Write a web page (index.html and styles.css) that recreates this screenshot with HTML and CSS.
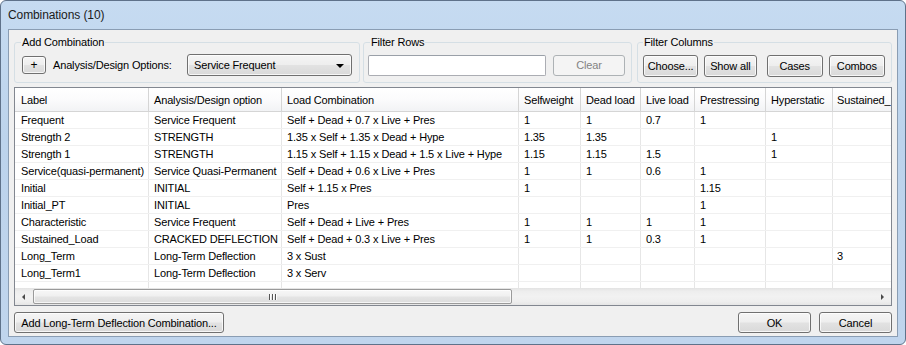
FILE: index.html
```html
<!DOCTYPE html>
<html>
<head>
<meta charset="utf-8">
<link rel="stylesheet" href="styles.css">
</head>
<body>
<div class="window">
  <div class="titlebar">Combinations (10)</div>
  <div class="client">
    <div class="groups">
      <fieldset class="group g1">
        <legend>Add Combination</legend>
        <div class="grow">
          <div class="btn plus">+</div>
          <span class="lbl">Analysis/Design Options:</span>
          <div class="btn combo"><span>Service Frequent</span><span class="arrow"></span></div>
        </div>
      </fieldset>
      <fieldset class="group g2">
        <legend>Filter Rows</legend>
        <div class="grow">
          <div class="textbox"></div>
          <div class="btn disabled clear">Clear</div>
        </div>
      </fieldset>
      <fieldset class="group g3">
        <legend>Filter Columns</legend>
        <div class="grow">
          <div class="btn choose">Choose...</div>
          <div class="btn showall">Show all</div>
          <div class="btn cases">Cases</div>
          <div class="btn combos">Combos</div>
        </div>
      </fieldset>
    </div>

    <div class="grid">
      <div class="gridbody">
        <div class="row head">
          <div class="cell">Label</div>
          <div class="cell">Analysis/Design option</div>
          <div class="cell">Load Combination</div>
          <div class="cell">Selfweight</div>
          <div class="cell">Dead load</div>
          <div class="cell">Live load</div>
          <div class="cell">Prestressing</div>
          <div class="cell">Hyperstatic</div>
          <div class="cell">Sustained_</div>
        </div>
        <div class="row">
          <div class="cell">Frequent</div><div class="cell">Service Frequent</div><div class="cell">Self + Dead + 0.7 x Live + Pres</div>
          <div class="cell">1</div><div class="cell">1</div><div class="cell">0.7</div><div class="cell">1</div><div class="cell"></div><div class="cell"></div>
        </div>
        <div class="row">
          <div class="cell">Strength 2</div><div class="cell">STRENGTH</div><div class="cell">1.35 x Self + 1.35 x Dead + Hype</div>
          <div class="cell">1.35</div><div class="cell">1.35</div><div class="cell"></div><div class="cell"></div><div class="cell">1</div><div class="cell"></div>
        </div>
        <div class="row">
          <div class="cell">Strength 1</div><div class="cell">STRENGTH</div><div class="cell">1.15 x Self + 1.15 x Dead + 1.5 x Live + Hype</div>
          <div class="cell">1.15</div><div class="cell">1.15</div><div class="cell">1.5</div><div class="cell"></div><div class="cell">1</div><div class="cell"></div>
        </div>
        <div class="row">
          <div class="cell">Service(quasi-permanent)</div><div class="cell">Service Quasi-Permanent</div><div class="cell">Self + Dead + 0.6 x Live + Pres</div>
          <div class="cell">1</div><div class="cell">1</div><div class="cell">0.6</div><div class="cell">1</div><div class="cell"></div><div class="cell"></div>
        </div>
        <div class="row">
          <div class="cell">Initial</div><div class="cell">INITIAL</div><div class="cell">Self + 1.15 x Pres</div>
          <div class="cell">1</div><div class="cell"></div><div class="cell"></div><div class="cell">1.15</div><div class="cell"></div><div class="cell"></div>
        </div>
        <div class="row">
          <div class="cell">Initial_PT</div><div class="cell">INITIAL</div><div class="cell">Pres</div>
          <div class="cell"></div><div class="cell"></div><div class="cell"></div><div class="cell">1</div><div class="cell"></div><div class="cell"></div>
        </div>
        <div class="row">
          <div class="cell">Characteristic</div><div class="cell">Service Frequent</div><div class="cell">Self + Dead + Live + Pres</div>
          <div class="cell">1</div><div class="cell">1</div><div class="cell">1</div><div class="cell">1</div><div class="cell"></div><div class="cell"></div>
        </div>
        <div class="row">
          <div class="cell">Sustained_Load</div><div class="cell">CRACKED DEFLECTION</div><div class="cell">Self + Dead + 0.3 x Live + Pres</div>
          <div class="cell">1</div><div class="cell">1</div><div class="cell">0.3</div><div class="cell">1</div><div class="cell"></div><div class="cell"></div>
        </div>
        <div class="row">
          <div class="cell">Long_Term</div><div class="cell">Long-Term Deflection</div><div class="cell">3 x Sust</div>
          <div class="cell"></div><div class="cell"></div><div class="cell"></div><div class="cell"></div><div class="cell"></div><div class="cell">3</div>
        </div>
        <div class="row">
          <div class="cell">Long_Term1</div><div class="cell">Long-Term Deflection</div><div class="cell">3 x Serv</div>
          <div class="cell"></div><div class="cell"></div><div class="cell"></div><div class="cell"></div><div class="cell"></div><div class="cell"></div>
        </div>
        <div class="row filler">
          <div class="cell"></div><div class="cell"></div><div class="cell"></div>
          <div class="cell"></div><div class="cell"></div><div class="cell"></div><div class="cell"></div><div class="cell"></div><div class="cell"></div>
        </div>
      </div>
      <div class="hscroll">
        <div class="sarrow"><span class="tri left"></span></div>
        <div class="track">
          <div class="thumb"><span class="grip"></span><span class="grip"></span><span class="grip"></span></div>
        </div>
        <div class="sarrow"><span class="tri right"></span></div>
      </div>
    </div>

    <div class="footer">
      <div class="btn addlt">Add Long-Term Deflection Combination...</div>
      <div class="spacer"></div>
      <div class="btn ok">OK</div>
      <div class="btn cancel">Cancel</div>
    </div>
  </div>
</div>
</body>
</html>
```

FILE: styles.css
```css
html, body {
  margin: 0;
  padding: 0;
  background: #ffffff;
}

.window {
  width: 906px;
  height: 345px;
  box-sizing: border-box;
  border: 1px solid #5f728a;
  border-radius: 6px;
  background: linear-gradient(to bottom, #c6dbf1 0%, #bcd3ec 40%, #c0d5ed 100%);
  display: flex;
  flex-direction: column;
  font-family: "Liberation Sans", Arial, sans-serif;
  font-size: 11px;
  letter-spacing: -0.15px;
  color: #000;
  overflow: hidden;
}

.titlebar {
  height: 28px;
  line-height: 28px;
  padding-left: 7px;
  font-size: 12px;
  letter-spacing: -0.1px;
  color: #1a1a1a;
}

.client {
  flex: 1;
  margin: 0 7px 7px 7px;
  border: 1px solid #8a9db3;
  background: #f0f0f0;
  padding: 6px 5px 3px 5px;
  display: flex;
  flex-direction: column;
}

.groups {
  display: flex;
  height: 47px;
}

.group {
  margin: 0;
  box-sizing: border-box;
  height: 47px;
  border: 1px solid #d5dfe5;
  border-radius: 3px;
  padding: 5px 6px 6px 6px;
  min-width: 0;
}

.group legend {
  padding: 0 1px;
  line-height: 13px;
  font-size: 11px;
  color: #000;
}

.g1 { width: 346px; }
.g2 { width: 269px; margin-left: 3px; padding-left: 3px; }
.g2 legend { margin-left: 3px; }
.g3 { width: 255px; margin-left: 5px; padding-left: 4px; }
.g3 legend { margin-left: 1px; }

.grow {
  display: flex;
  align-items: center;
  height: 22px;
}

.btn {
  box-sizing: border-box;
  border: 1px solid #707070;
  border-radius: 3px;
  background: linear-gradient(to bottom, #f5f5f5 0%, #eeeeee 48%, #e2e2e2 52%, #d9d9d9 100%);
  box-shadow: inset 0 0 0 1px rgba(255,255,255,0.75);
  display: flex;
  align-items: center;
  justify-content: center;
  white-space: nowrap;
  color: #000;
}

.plus {
  width: 24px;
  height: 18px;
  margin-left: 1px;
  font-size: 12px;
}

.lbl {
  margin-left: 7px;
  width: 134px;
  white-space: nowrap;
}

.combo {
  width: 165px;
  height: 22px;
  justify-content: space-between;
  padding: 0 7px 0 6px;
}

.arrow {
  width: 0;
  height: 0;
  border-left: 4px solid transparent;
  border-right: 4px solid transparent;
  border-top: 4px solid #000;
  margin-top: 1px;
}

.textbox {
  box-sizing: border-box;
  width: 178px;
  height: 21px;
  margin-left: 1px;
  margin-top: 1px;
  background: #fff;
  border: 1px solid #abadb3;
  border-top-color: #9aa0a8;
  border-radius: 2px;
}

.clear {
  width: 72px;
  height: 21px;
  margin-left: 7px;
}

.disabled {
  border-color: #adb2b5;
  background: #f4f4f4;
  color: #838383;
  box-shadow: none;
}

.g3 .btn { height: 22px; margin-top: 1px; }
.choose { width: 56px; margin-left: 1px; }
.showall { width: 53px; margin-left: 6px; }
.cases { width: 57px; margin-left: 10px; }
.combos { width: 57px; margin-left: 6px; }

/* grid */
.grid {
  margin-top: 4px;
  height: 219px;
  box-sizing: border-box;
  border: 1px solid #828790;
  background: #fff;
  display: flex;
  flex-direction: column;
  overflow: hidden;
}

.gridbody {
  flex: 1;
  display: flex;
  flex-direction: column;
  overflow: hidden;
}

.row {
  display: grid;
  grid-template-columns: 134px 133px 237px 62px 60px 54px 71px 67px 59px;
  height: 17px;
  flex: none;
  box-sizing: border-box;
  border-bottom: 1px solid #f0f0f0;
}

.cell {
  box-sizing: border-box;
  border-right: 1px solid #e6e6e6;
  padding-left: 5px;
  padding-top: 1px;
  line-height: 15px;
  white-space: nowrap;
  overflow: hidden;
}

.row .cell:first-child { padding-left: 6px; }
.row .cell:last-child { border-right: none; padding-left: 4px; }

.row.head {
  height: 24px;
  background: linear-gradient(to bottom, #ffffff 0%, #fbfbfc 50%, #f2f3f5 100%);
  border-bottom: 1px solid #d5d5d5;
}

.row.head .cell {
  padding-top: 1px;
  line-height: 22px;
  border-right-color: #d5d5d5;
}

.row.filler {
  flex: 1;
  height: auto;
  border-bottom: none;
}

/* horizontal scrollbar */
.hscroll {
  height: 17px;
  flex: none;
  display: flex;
  background: linear-gradient(to bottom, #e3e3e3 0%, #eeeeee 20%, #f2f2f2 50%, #eeeeee 80%, #e5e5e5 100%);
}

.sarrow {
  width: 17px;
  display: flex;
  align-items: center;
  justify-content: center;
}

.tri {
  width: 0;
  height: 0;
  border-top: 3px solid transparent;
  border-bottom: 3px solid transparent;
}
.tri.left { border-right: 3px solid #4a4a4a; }
.tri.right { border-left: 3px solid #4a4a4a; }

.track {
  flex: 1;
  display: flex;
  align-items: center;
}

.thumb {
  box-sizing: border-box;
  width: 479px;
  height: 15px;
  margin-left: 1px;
  border: 1px solid #9a9a9a;
  border-radius: 2px;
  background: linear-gradient(to bottom, #f7f7f7 0%, #f0f0f0 45%, #e4e4e4 55%, #dcdcdc 100%);
  box-shadow: inset 0 0 0 1px rgba(255,255,255,0.7);
  display: flex;
  align-items: center;
  justify-content: center;
  gap: 1px;
}

.grip {
  width: 1px;
  height: 6px;
  background: #555;
  box-shadow: 1px 0 0 #fff;
  margin-right: 1px;
}

/* footer */
.footer {
  margin-top: 6px;
  height: 21px;
  display: flex;
}

.footer .btn { height: 21px; }
.addlt { width: 210px; }
.spacer { flex: 1; }
.ok { width: 73px; }
.cancel { width: 73px; margin-left: 8px; }
```
